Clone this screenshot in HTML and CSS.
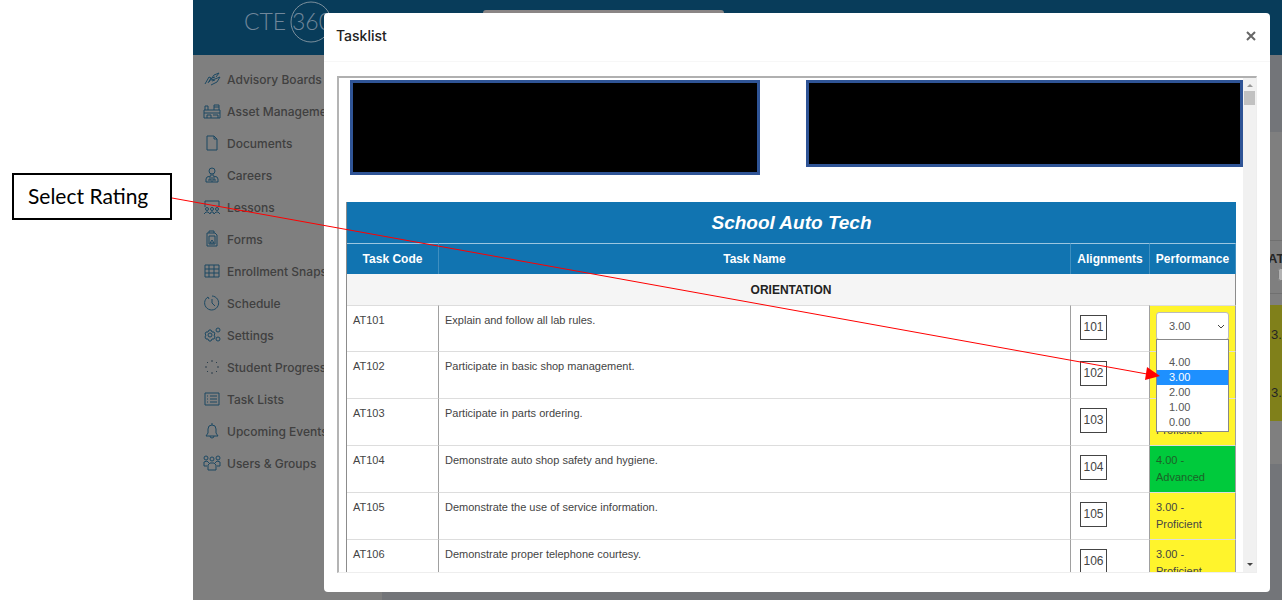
FILE: index.html
```
<!DOCTYPE html>
<html lang="en">
<head>
    <meta charset="UTF-8">
    <meta name="viewport" content="width=device-width, initial-scale=1.0">
    <title>CTE 360 - Tasklist</title>
    <link rel="stylesheet" href="styles.css">
</head>
<body>
    <aside class="notes">
        <div class="callout">Select Rating</div>
    </aside>

    <div class="app">
        <header class="topbar">
            <svg class="logo" width="90" height="44" viewBox="0 0 90 44">
                <text x="0" y="30">CTE</text>
                <circle cx="67" cy="22" r="20"/>
                <text x="48" y="30">360</text>
            </svg>
            <div class="search"></div>
        </header>

        <div class="page">
            <nav class="sidebar">
                <a href="#"><svg viewBox="0 0 18 18"><path d="M2 14l4-7 2 1-3 5M6 12l5-7 5-2-3 4M8 15l6-3 3-5-5 2-4 1M9 8l3-1M9 11l3-1"/></svg>Advisory Boards</a>
                <a href="#"><svg viewBox="0 0 18 18"><path d="M1 16V8h16v8zM1 11h16M4 16v-3h4v3M10 13h5v3M2 8V4h3v4M11 8V3h5v5M11 5h5"/></svg>Asset Management</a>
                <a href="#"><svg viewBox="0 0 18 18"><path d="M4 2h7l3 3v11H4zM11 2v3h3"/></svg>Documents</a>
                <a href="#"><svg viewBox="0 0 18 18"><circle cx="9" cy="5" r="3"/><path d="M8 8v2l-4 1-1 2v3h12v-3l-1-2-4-1V8M7 11v3M11 11v3M9 11v5M5 14h3M10 14h3"/></svg>Careers</a>
                <a href="#"><svg viewBox="0 0 18 18"><path d="M2 9V3h14v6"/><circle cx="4" cy="11" r="1.5"/><circle cx="9" cy="11" r="1.5"/><circle cx="14" cy="11" r="1.5"/><path d="M1 16l2-2h2l2 2 1-2h2l1 2 2-2h2l2 2"/></svg>Lessons</a>
                <a href="#"><svg viewBox="0 0 18 18"><path d="M4 3h8l2 2v11H4zM6 3V1h5v2M6 6h6v8H6zM7 13l2-3 2 3z"/></svg>Forms</a>
                <a href="#"><svg viewBox="0 0 18 18"><path d="M2 3h14v12H2zM2 7h14M2 11h14M6 3v12M11 3v12"/></svg>Enrollment Snapshot</a>
                <a href="#"><svg viewBox="0 0 18 18"><path d="M5 3a7 7 0 1 0 4-1M9 5v4l3 3M5 3l1 2"/></svg>Schedule</a>
                <a href="#"><svg viewBox="0 0 18 18"><circle cx="7" cy="9" r="2"/><path d="M6 4h2l1 2 2 0 1 2-1 1 1 2-1 2-2 0-1 2H6l-1-2-2 0-1-2 1-2-1-1 1-2 2 0z"/><circle cx="15" cy="4" r="2"/><circle cx="15" cy="13" r="2"/></svg>Settings</a>
                <a href="#"><svg viewBox="0 0 18 18"><path class="dots" d="M9 2v2M14 4l-1 1M16 9h-2M14 14l-1-1M9 16v-2M4 14l1-1M2 9h2M4 4l1 1"/></svg>Student Progress</a>
                <a href="#"><svg viewBox="0 0 18 18"><path d="M2 3h14v12H2zM7 6h7M7 9h7M7 12h7M4 6h1M4 9h1M4 12h1"/></svg>Task Lists</a>
                <a href="#"><svg viewBox="0 0 18 18"><path d="M3 14l2-3V7a4 4 0 0 1 8 0v4l2 3zM9 3V1M7 14a2 2 0 0 0 4 0"/></svg>Upcoming Events</a>
                <a href="#"><svg viewBox="0 0 18 18"><circle cx="9" cy="5" r="2"/><circle cx="3" cy="4" r="2"/><circle cx="15" cy="4" r="2"/><path d="M5 16v-5l2-2h4l2 2v5zM1 12V8l3-1 2 2M17 12V8l-3-1-2 2M1 12h3M14 12h3"/></svg>Users &amp; Groups</a>
            </nav>

            <main class="content">
                <div class="panel">
                    <div class="panel-head"><span>AT<br><input type="checkbox" aria-label="Select AT"></span></div>
                    <div class="panel-row"><span>3.00</span></div>
                    <div class="panel-row"><span>3.00</span></div>
                </div>
            </main>
        </div>

        <section class="modal" role="dialog" aria-labelledby="modalTitle">
            <div class="modal-header">
                <h1 id="modalTitle">Tasklist</h1>
                <button class="close" type="button" aria-label="Close">
                    <svg width="10" height="10" viewBox="0 0 10 10"><path d="M1 1l8 8M9 1L1 9"/></svg>
                </button>
            </div>

            <div class="frame">
                <div class="frame-body">
                    <div class="redactions">
                        <div class="redacted redacted-left"></div>
                        <div class="redacted redacted-right"></div>
                    </div>

                    <table class="tasks">
                        <colgroup>
                            <col class="col-code">
                            <col>
                            <col class="col-align">
                            <col class="col-perf">
                        </colgroup>
                        <thead>
                            <tr class="title-row"><th colspan="4">School Auto Tech</th></tr>
                            <tr class="head-row">
                                <th>Task Code</th>
                                <th>Task Name</th>
                                <th>Alignments</th>
                                <th>Performance</th>
                            </tr>
                        </thead>
                        <tbody>
                            <tr class="group-row"><th colspan="4">ORIENTATION</th></tr>
                            <tr class="editing">
                                <td>AT101</td>
                                <td>Explain and follow all lab rules.</td>
                                <td><button class="align" type="button">101</button></td>
                                <td class="proficient">
                                    <div class="rating">
                                        <select aria-label="Rating for AT101">
                                            <option></option>
                                            <option>4.00</option>
                                            <option selected>3.00</option>
                                            <option>2.00</option>
                                            <option>1.00</option>
                                            <option>0.00</option>
                                        </select>
                                        <svg class="chevron" width="8" height="6" viewBox="0 0 8 6"><path d="M1 1l3 3 3-3"/></svg>
                                        <ul class="rating-menu" role="listbox" aria-label="Rating">
                                            <li role="option"></li>
                                            <li role="option">4.00</li>
                                            <li role="option" class="active" aria-selected="true">3.00</li>
                                            <li role="option">2.00</li>
                                            <li role="option">1.00</li>
                                            <li role="option">0.00</li>
                                        </ul>
                                    </div>
                                </td>
                            </tr>
                            <tr>
                                <td>AT102</td>
                                <td>Participate in basic shop management.</td>
                                <td><button class="align" type="button">102</button></td>
                                <td class="proficient">3.00 - Proficient</td>
                            </tr>
                            <tr>
                                <td>AT103</td>
                                <td>Participate in parts ordering.</td>
                                <td><button class="align" type="button">103</button></td>
                                <td class="proficient">3.00 - Proficient</td>
                            </tr>
                            <tr>
                                <td>AT104</td>
                                <td>Demonstrate auto shop safety and hygiene.</td>
                                <td><button class="align" type="button">104</button></td>
                                <td class="advanced">4.00 - Advanced</td>
                            </tr>
                            <tr>
                                <td>AT105</td>
                                <td>Demonstrate the use of service information.</td>
                                <td><button class="align" type="button">105</button></td>
                                <td class="proficient">3.00 - Proficient</td>
                            </tr>
                            <tr>
                                <td>AT106</td>
                                <td>Demonstrate proper telephone courtesy.</td>
                                <td><button class="align" type="button">106</button></td>
                                <td class="proficient">3.00 - Proficient</td>
                            </tr>
                        </tbody>
                    </table>
                </div>

                <div class="scrollbar">
                    <svg width="8" height="5" viewBox="0 0 8 5"><path class="up" d="M1 4h6L4 1z"/></svg>
                    <div class="thumb"></div>
                    <svg width="8" height="5" viewBox="0 0 8 5"><path class="down" d="M1 1h6L4 4z"/></svg>
                </div>
            </div>
        </section>
    </div>

    <!-- arrow from the callout to the open rating menu -->
    <svg class="arrow">
        <line x1="172" y1="198" x2="1147" y2="374"/>
        <path d="M1147 367L1145 380L1160 376z"/>
    </svg>
</body>
</html>
```
FILE: styles.css
```
* {
    box-sizing: border-box;
}

body {
    margin: 0;
    display: flex;
    min-height: 100vh;
    position: relative;
    overflow: hidden;
    background: #fff;
    color: #444;
    font-family: "Liberation Sans", Arial, sans-serif;
    font-size: 12px;
}

/* Annotation on the left */
.notes {
    flex: 0 0 193px;
    padding: 173px 21px 0 12px;
}

.callout {
    border: 2px solid #000;
    padding: 8px 0 9px 14px;
    font-family: Lato, "Open Sans", sans-serif;
    font-size: 21px;
    line-height: 26px;
    color: #000;
    white-space: nowrap;
}

.arrow {
    position: absolute;
    top: 0;
    left: 0;
    width: 100%;
    height: 100%;
    pointer-events: none;
}

.arrow line {
    stroke: #f00;
    stroke-width: 1;
}

.arrow path {
    fill: #f00;
}

/* Dimmed application */
.app {
    flex: 1;
    min-width: 0;
    display: flex;
    flex-direction: column;
    position: relative;
    background: #737579;
}

.topbar {
    height: 55px;
    padding-left: 51px;
    display: flex;
    align-items: flex-start;
    background: #083c5a;
}

.logo text {
    fill: #71879a;
    font-family: Lato, sans-serif;
    font-weight: 300;
    font-size: 23px;
}

.logo circle {
    fill: none;
    stroke: #7b8f9c;
}

.search {
    width: 241px;
    height: 32px;
    margin: 10px 0 0 149px;
    border-radius: 3px;
    background: #8a8585;
}

.page {
    flex: 1;
    display: flex;
}

.sidebar {
    flex: 0 0 189px;
    padding: 8px 0 0 10px;
    background: #7f7f7f;
}

.sidebar a {
    display: flex;
    align-items: center;
    gap: 6px;
    height: 32px;
    color: #404040;
    font-family: Inter, sans-serif;
    font-size: 12px;
    font-weight: 500;
    text-decoration: none;
    white-space: nowrap;
}

.sidebar svg {
    flex: none;
    width: 18px;
    height: 18px;
    fill: none;
    stroke: #1d4963;
    stroke-width: 1;
}

.sidebar .dots {
    stroke: #2c3f4c;
}

.content {
    flex: 1;
    padding-top: 77px;
}

.panel {
    height: 332px;
    padding-top: 108px;
    background: #7f7f7f;
}

.panel-head,
.panel-row {
    display: flex;
    justify-content: flex-end;
    align-items: center;
    font-size: 13px;
    color: #252525;
}

.panel-head {
    height: 54px;
    margin-bottom: 11px;
    border-top: 1px solid #707070;
    border-bottom: 1px solid #707070;
    font-weight: bold;
}

.panel-row {
    height: 58px;
    background: #80801a;
}

.panel span {
    width: 14px;
    overflow: hidden;
}

.panel-row span {
    padding-left: 3px;
}

.panel input {
    margin: 2px 0 0 10px;
    opacity: 0.4;
}

/* Tasklist modal */
.modal {
    position: absolute;
    top: 13px;
    left: 131px;
    right: 12px;
    border-radius: 4px;
    background: #fff;
    padding-bottom: 19px;
}

.modal-header {
    display: flex;
    justify-content: space-between;
    align-items: center;
    height: 49px;
    padding: 0 14px 3px 12px;
    border-bottom: 1px solid #f7f7f7;
}

.modal-header h1 {
    margin: 0;
    color: #222;
    font-family: Inter, sans-serif;
    font-size: 14px;
    font-weight: 500;
}

.close {
    display: flex;
    padding: 0;
    border: none;
    background: none;
    cursor: pointer;
}

.close path {
    stroke: #666;
    stroke-width: 2;
}

.frame {
    display: flex;
    height: 497px;
    margin: 14px 13px 0;
    border: 1px solid #eee;
    border-top: 2px solid #b0b0b0;
    border-left: 2px solid #b4b4b4;
    overflow: hidden;
}

.frame-body {
    flex: 1;
    min-width: 0;
    padding-top: 2px;
}

.redactions {
    display: flex;
    justify-content: space-between;
    align-items: flex-start;
    gap: 46px;
    height: 122px;
    padding-left: 11px;
}

.redacted {
    border: 3px solid #2f5496;
    background: #000;
}

.redacted-left {
    flex: 410;
    height: 95px;
}

.redacted-right {
    flex: 437;
    height: 87px;
}

/* Task table */
.tasks {
    width: calc(100% - 14px);
    margin-left: 7px;
    table-layout: fixed;
    border-collapse: separate;
    border-spacing: 0;
    border-left: 1px solid #8c8c8c;
}

.col-code {
    width: 92px;
}

.col-align {
    width: 79px;
}

.col-perf {
    width: 86px;
}

.tasks th {
    padding: 0;
}

.title-row th {
    height: 41px;
    background: #1174b1;
    color: #fff;
    font-size: 19px;
    font-style: italic;
}

.head-row th {
    height: 31px;
    border-top: 1px solid #9cc6e0;
    border-right: 1px solid #3f8fc0;
    background: #1174b1;
    color: #fff;
}

.group-row th {
    height: 31px;
    border-right: 1px solid #8c8c8c;
    background: #f5f5f5;
    color: #222;
}

.tasks td {
    height: 47px;
    padding: 6px;
    border-top: 1px solid #ddd;
    border-right: 1px solid #a0a0a0;
    font-size: 11px;
    line-height: 17px;
    vertical-align: top;
}

.tasks .editing td {
    height: 46px;
}

.tasks td.proficient {
    background: #fff42c;
}

.tasks td.advanced {
    background: #00ca3c;
    color: #1d6228;
}

.align {
    display: block;
    width: 27px;
    height: 25px;
    margin: 3px 0 0 3px;
    padding: 0;
    border: 1px solid #444;
    background: #fff;
    color: #444;
    font: inherit;
    font-size: 12px;
}

.rating {
    position: relative;
    width: 73px;
}

.rating select {
    display: block;
    width: 100%;
    height: 28px;
    padding: 0 12px;
    appearance: none;
    border: 1px solid #bbb;
    border-radius: 3px;
    background: #fff;
    color: #555;
    font: inherit;
}

.chevron {
    position: absolute;
    top: 12px;
    right: 4px;
    fill: none;
    stroke: #444;
}

.rating-menu {
    position: absolute;
    top: 27px;
    left: 0;
    width: 100%;
    margin: 0;
    padding: 0 0 1px;
    border: 1px solid #888;
    background: #fff;
    color: #555;
    list-style: none;
    line-height: 15px;
}

.rating-menu li {
    height: 15px;
    padding-left: 12px;
}

.rating-menu .active {
    background: #1e90ff;
    color: #fff;
}

/* Scrollbar of the frame */
.scrollbar {
    flex: 0 0 13px;
    display: flex;
    flex-direction: column;
    align-items: center;
    padding: 5px 0;
    background: #f1f1f1;
}

.scrollbar .thumb {
    width: 11px;
    height: 14px;
    margin: 3px 0 auto;
    background: #c1c1c1;
}

.scrollbar .up {
    fill: #999;
}

.scrollbar .down {
    fill: #444;
}
```
